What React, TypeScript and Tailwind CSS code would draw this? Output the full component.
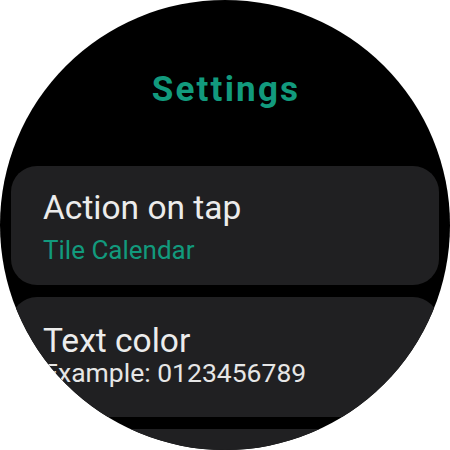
import React from "react";

export default function App() {
  const font = { fontFamily: "Roboto, 'Noto Sans', sans-serif" };
  return (
    <div className="w-[450px] h-[450px] bg-white" style={font}>
      <div className="w-[450px] h-[450px] rounded-full bg-black overflow-hidden flex flex-col">
        <div className="shrink-0 pt-[70px] h-[166px] text-center">
          <div className="text-[35px] leading-[40px] font-bold text-[#129a7d] tracking-[2.2px] pl-[2px]">
            Settings
          </div>
        </div>
        <div className="shrink-0 mx-[11px] flex flex-col gap-[12px]">
          <div className="shrink-0 h-[119px] rounded-[26px] bg-[#202022] pl-[32px] pt-[22px]">
            <div className="text-[33.5px] leading-[40px] text-[#ececec]">Action on tap</div>
            <div className="mt-[7px] text-[26px] leading-[30px] text-[#129a7d]">Tile Calendar</div>
          </div>
          <div className="shrink-0 h-[120px] rounded-[26px] bg-[#202022] pl-[32px] pt-[24px]">
            <div className="text-[33.5px] leading-[40px] text-[#ececec]">Text color</div>
            <div className="text-[26.5px] leading-[24px] text-[#e6e6e6]">Example: 0123456789</div>
          </div>
          <div className="shrink-0 h-[120px] rounded-[26px] bg-[#202022]" />
        </div>
      </div>
    </div>
  );
}
